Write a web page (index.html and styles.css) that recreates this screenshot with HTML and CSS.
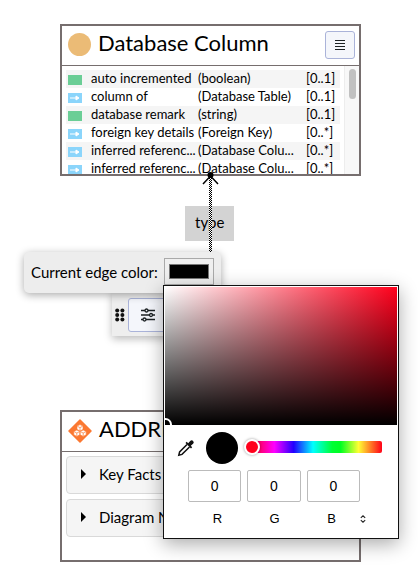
FILE: index.html
```html
<!DOCTYPE html>
<html lang="en">
<head>
<meta charset="utf-8">
<meta name="viewport" content="width=device-width, initial-scale=1">
<title>Diagram</title>
<link rel="stylesheet" href="styles.css">
</head>
<body>
<main class="canvas">
  <section class="node node-class">
    <header class="node-header">
      <span class="class-dot"></span>
      <h2>Database Column</h2>
      <button class="menu-button" type="button" aria-label="Menu">
        <svg width="12" height="12" viewBox="0 0 12 12"><path d="M1 1.500h10M1 4.500h10M1 7.500h10M1 10.500h10" stroke="#1c2224" stroke-width="1.200"/></svg>
      </button>
    </header>
    <div class="node-body">
      <table class="properties">
        <tr><td><i class="kind attr"></i></td><td>auto incremented</td><td>(boolean)</td><td>[0..1]</td></tr>
        <tr><td><i class="kind ref"><svg viewBox="0 0 14 10"><path d="M2 5h8M8 3l3 2-3 2z"/></svg></i></td><td>column of</td><td>(Database Table)</td><td>[0..1]</td></tr>
        <tr><td><i class="kind attr"></i></td><td>database remark</td><td>(string)</td><td>[0..1]</td></tr>
        <tr><td><i class="kind ref"><svg viewBox="0 0 14 10"><path d="M2 5h8M8 3l3 2-3 2z"/></svg></i></td><td>foreign key details</td><td>(Foreign Key)</td><td>[0..*]</td></tr>
        <tr><td><i class="kind ref"><svg viewBox="0 0 14 10"><path d="M2 5h8M8 3l3 2-3 2z"/></svg></i></td><td>inferred referenc...</td><td>(Database Colu...</td><td>[0..*]</td></tr>
        <tr><td><i class="kind ref"><svg viewBox="0 0 14 10"><path d="M2 5h8M8 3l3 2-3 2z"/></svg></i></td><td>inferred referenc...</td><td>(Database Colu...</td><td>[0..*]</td></tr>
      </table>
      <div class="scrollbar"><div class="thumb"></div></div>
    </div>
  </section>

  <div class="edge-label">type</div>
  <svg class="edge" width="20" height="82" viewBox="0 0 20 82">
    <defs><pattern id="dots" width="2" height="2" patternUnits="userSpaceOnUse"><path d="M0 0h1v1H0zM1 1h1v1H1z"/></pattern></defs>
    <rect x="9" y="4" width="3" height="78" fill="#fff"/>
    <rect x="9" y="4" width="3" height="78" fill="url(#dots)" shape-rendering="crispEdges"/>
    <path d="M3 13 10.500 5 18 13" fill="none" stroke="#000" stroke-width="1.500"/>
    <circle cx="10.500" cy="4" r="3"/>
  </svg>

  <section class="node node-instance">
    <header class="node-header">
      <svg class="diamond" width="24" height="24" viewBox="0 0 24 24">
        <path d="M12 1 23 12 12 23 1 12z" fill="#fb7831" stroke="#fb7831" stroke-width="1.500" stroke-linejoin="round"/>
        <g fill="#fff" stroke="#fb7831" stroke-width=".6"><path d="m12 5.600 3 1.500v3.300l-3 1.600-3-1.600V7.100z"/><path d="m8.800 11 3 1.500v3.300l-3 1.600-3-1.600v-3.300z"/><path d="m15.200 11 3 1.500v3.300l-3 1.600-3-1.600v-3.300z"/></g>
        <path d="m9.500 7.400 2.500 1.200 2.500-1.200M12 8.600v3M6.300 12.800l2.500 1.200 2.500-1.200M8.800 14v3M12.700 12.800l2.500 1.200 2.500-1.200M15.200 14v3" fill="none" stroke="#fb7831" stroke-width=".7"/>
      </svg>
      <h2>ADDRESS</h2>
    </header>
    <div class="sections">
      <button class="section" type="button"><span class="caret"></span>Key Facts</button>
      <button class="section" type="button"><span class="caret"></span>Diagram Notes</button>
    </div>
  </section>

  <div class="toolbar">
    <svg width="10" height="14" viewBox="0 0 10 14"><g fill="#111"><circle cx="2.200" cy="2.500" r="2"/><circle cx="7.400" cy="2.500" r="2"/><circle cx="2.200" cy="7" r="2"/><circle cx="7.400" cy="7" r="2"/><circle cx="2.200" cy="11.500" r="2"/><circle cx="7.400" cy="11.500" r="2"/></g></svg>
    <button class="tool" type="button" aria-label="Settings">
      <svg width="14" height="14" viewBox="0 0 14 14"><g stroke="#1c2224" stroke-width="1.300" fill="#f4f6fb"><path d="M0 2.500h14M0 7h14M0 11.500h14"/><circle cx="5.500" cy="2.500" r="1.500"/><circle cx="10" cy="7" r="1.500"/><circle cx="3.500" cy="11.500" r="1.500"/></g></svg>
    </button>
  </div>

  <div class="color-panel">
    <label for="edge-color">Current edge color:</label>
    <input id="edge-color" type="color" value="#000000">
  </div>

  <div class="picker">
    <div class="spectrum"><span class="spectrum-handle"></span></div>
    <div class="picker-row">
      <button class="dropper" type="button" aria-label="Pick from screen">
        <svg width="18" height="18" viewBox="0 0 18 18"><path d="M10 5.500 2.600 13l-.8 3.200L5 15.400 12.500 8" fill="none" stroke="#111" stroke-width="1.500"/><path d="m8.500 4 1.200-1.200 1.500 1.400 2-2.300q1.500-1.400 2.900 0t0 2.900l-2.300 2 1.400 1.500L14 9.500z" fill="#111"/></svg>
      </button>
      <span class="current"></span>
      <input class="hue" type="range" min="0" max="360" value="0" aria-label="Hue">
    </div>
    <div class="channels">
      <input id="r" type="text" value="0"><input id="g" type="text" value="0"><input id="b" type="text" value="0">
    </div>
    <div class="channel-names">
      <label for="r">R</label><label for="g">G</label><label for="b">B</label>
      <button class="format" type="button" aria-label="Change format">
        <svg width="6" height="8" viewBox="0 0 6 8"><path d="M.8 2.800 3 .8l2.200 2M.8 5.200l2.200 2 2.200-2" fill="none" stroke="#222" stroke-width="1.100"/></svg>
      </button>
    </div>
  </div>
</main>
</body>
</html>
```
FILE: styles.css
```css
* { box-sizing: border-box; }
body {
  margin: 0;
  background: #fff;
  color: #000;
  font: 13px/16px Lato, "Open Sans", sans-serif;
}
button, input { font: inherit; color: inherit; margin: 0; padding: 0; }
svg { display: block; }
.canvas { position: relative; min-height: 100vh; overflow: hidden; }

/* Diagram nodes */
.node {
  position: absolute;
  left: 60px;
  width: 301px;
  background: #fff;
  border: 2px solid #766e6e;
}
.node-class { top: 24px; height: 152px; }
.node-instance { top: 410px; height: 152px; }
.node-header {
  display: flex;
  align-items: center;
  height: 40px;
  padding: 0 4px 2px 6px;
  border-bottom: 1px solid #766e6e;
}
.node-header h2 {
  flex: 1;
  margin: 0;
  padding: 0 0 4px 7px;
  font-size: 22px;
  line-height: 26px;
  font-weight: 400;
}
.class-dot { width: 23px; height: 23px; border-radius: 50%; background: #ebbb76; }
.menu-button {
  display: grid;
  place-items: center;
  width: 30px;
  height: 28px;
  background: #f4f6fb;
  border: 1px solid #aab3d9;
  border-radius: 3px;
}
.node-body { display: flex; height: 108px; overflow: hidden; }
.properties {
  flex: 1;
  align-self: flex-start;
  margin: 4px 4px 0;
  border-collapse: collapse;
  table-layout: fixed;
  white-space: nowrap;
}
.properties td { height: 18px; padding: 0 0 2px; }
.properties td:nth-child(1) { width: 25px; padding: 1px 0 0 2px; }
.properties td:nth-child(2) { width: 107px; }
.properties td:nth-child(3) { width: 108px; }
.properties tr:nth-child(odd) { background: #f5f5f5; }
.kind { display: block; width: 14px; height: 10px; }
.attr { background: #6bce96; }
.ref { background: #8bd5fb; }
.ref path { fill: #fff; stroke: #fff; }
.scrollbar { width: 15px; padding: 3px 3px 0 4px; background: #f8f8f8; border-left: 1px solid #ededed; }
.thumb { height: 30px; border-radius: 4px; background: #c1c1c1; }

.sections { display: flex; flex-direction: column; gap: 5px; padding: 4px; }
.section {
  display: flex;
  align-items: center;
  gap: 13px;
  height: 38px;
  padding: 0 0 2px 14px;
  font-size: 15px;
  background: #f5f5f5;
  border: 1px solid #d9d9d9;
  border-radius: 4px;
}
.caret { border: 5px solid transparent; border-left-color: #000; border-right: 0; }

/* Edge between the nodes */
.edge-label {
  position: absolute;
  left: 185px;
  top: 206px;
  padding: 8px 10px 11px;
  font-size: 15px;
  background: #d3d3d3;
}
.edge { position: absolute; left: 200px; top: 171px; }

/* Edge tools */
.toolbar {
  position: absolute;
  left: 112px;
  top: 290px;
  display: flex;
  align-items: center;
  gap: 3px;
  padding: 8px 4px 4px 3px;
  background: #eee;
  box-shadow: 0 3px 8px #0004;
}
.tool {
  display: grid;
  place-items: center;
  width: 40px;
  height: 34px;
  background: #f4f6fb;
  border: 1px solid #aab3d9;
  border-radius: 3px;
}
.color-panel {
  position: absolute;
  left: 24px;
  top: 252px;
  display: flex;
  align-items: center;
  justify-content: space-between;
  width: 197px;
  height: 41px;
  padding: 0 7px 2px;
  font-size: 15px;
  background: #ededed;
  border-radius: 5px;
  box-shadow: 0 2px 8px #0005;
}
.color-panel input {
  width: 50px;
  height: 27px;
  padding: 1px 2px;
  background: #efefef;
  border: 1px solid #a9a9a9;
}

/* Color picker popup */
.picker {
  position: absolute;
  left: 163px;
  top: 285px;
  width: 236px;
  padding: 1px;
  background: #fff;
  border: 1px solid #111;
  box-shadow: 0 5px 18px #0005;
}
.spectrum {
  position: relative;
  height: 138px;
  overflow: hidden;
  background: linear-gradient(to top, #000, transparent), linear-gradient(to right, #fff, #ff001c);
}
.spectrum-handle {
  position: absolute;
  left: -6px;
  bottom: -6px;
  width: 13px;
  height: 13px;
  border: 2px solid #fff;
  border-radius: 50%;
  background: #000;
}
.picker-row { display: flex; align-items: center; gap: 11px; padding: 7px 15px 6px 12px; }
.dropper, .format { display: block; background: none; border: 0; }
.current { width: 32px; height: 32px; border-radius: 50%; background: #000; flex: none; }
.hue {
  appearance: none;
  flex: 1;
  min-width: 0;
  height: 12px;
  margin: 0 0 2px -5px;
  border-radius: 2px;
  background: linear-gradient(to right, #fff 7px, #ff001c 7px, #f0f 22%, #20f 36%, #0ff 50%, #0f3 64%, #0f2 70%, #ff3 83%, #ff0018);
}
.hue::-webkit-slider-thumb {
  appearance: none;
  width: 16px;
  height: 16px;
  border: 2px solid #fff;
  border-radius: 50%;
  background: #ff001c;
  box-shadow: 0 0 3px #0006;
}
.channels { display: grid; grid-template-columns: repeat(3, 1fr); gap: 6px; padding: 0 37px 0 23px; }
.channels input {
  width: 100%;
  min-width: 0;
  height: 32px;
  border: 1px solid #bbb;
  border-radius: 2px;
  text-align: center;
  font-size: 14px;
}
.channel-names {
  display: grid;
  grid-template-columns: repeat(3, 57px) 8px;
  align-items: center;
  padding: 9px 0 10px 24px;
  text-align: center;
}
.channels input, .channel-names { font-family: "Liberation Sans", sans-serif; }
```
